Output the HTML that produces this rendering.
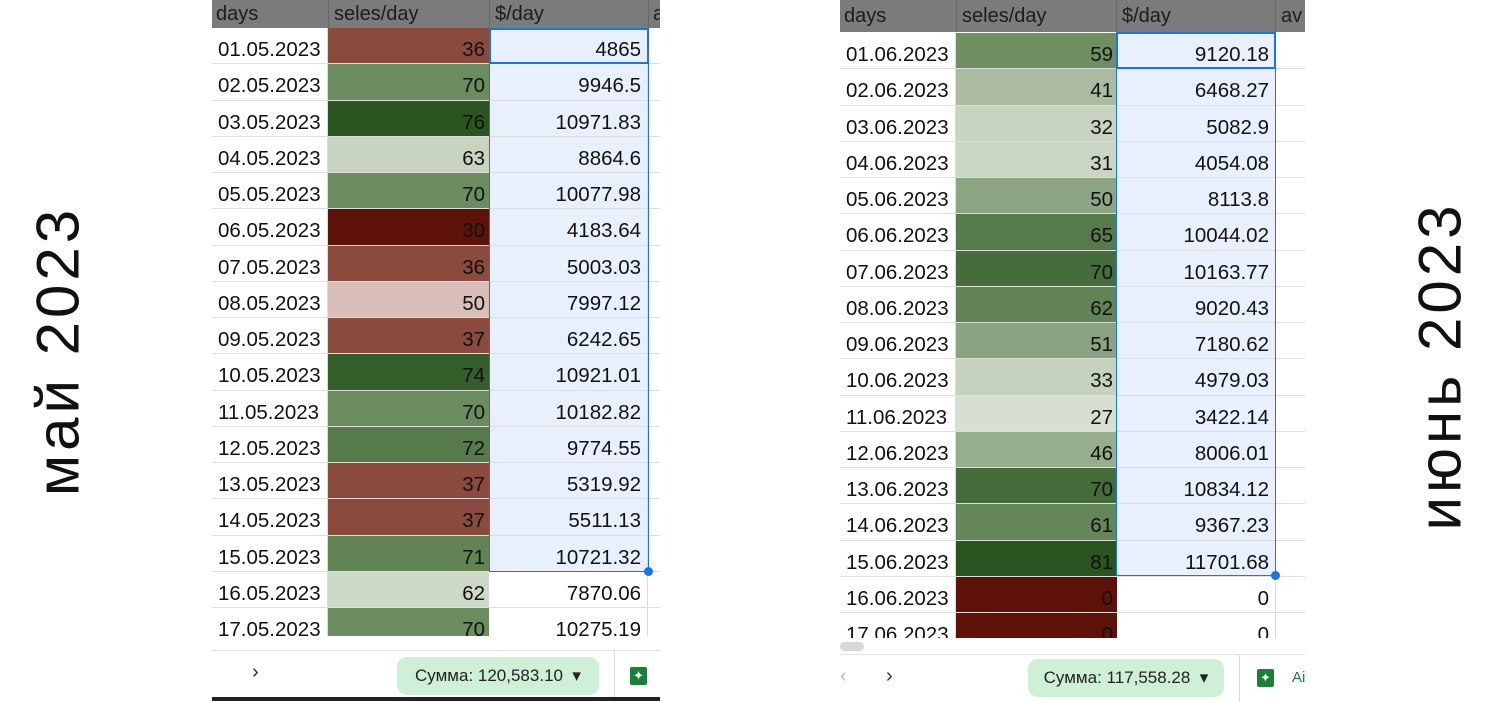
<!DOCTYPE html>
<html><head><meta charset="utf-8"><style>
*{margin:0;padding:0;box-sizing:border-box}
body{width:1488px;height:701px;background:#fff;position:relative;overflow:hidden;font-family:"Liberation Sans",Arial,sans-serif;color:#111}
.sheet{position:absolute;top:0;overflow:hidden;background:#fff}
.hdr{position:absolute;left:0;top:0;right:0;background:#7b7b7b;font-size:20px;color:#1c1c1c}
.hdr span{position:absolute;top:3px}
.row{position:absolute;left:0;right:0;height:36.25px;border-bottom:1px solid #ddd;font-size:20.5px}
.row div{position:absolute;top:0;height:100%;line-height:36px;padding-top:4px}
.d{left:0;width:116px;padding-left:6px;border-right:1px solid #ddd}
.s{left:116px;width:161px;text-align:right;padding-right:4px}
.v{left:277px;width:159px;text-align:right;padding-right:6px;border-right:1px solid #ddd}
.sel .v{background:#e8f0fe}
.lbl{position:absolute;font-size:60px;letter-spacing:4px;color:#111;white-space:nowrap;transform:translate(-50%,-50%) rotate(-90deg)}
.foot{position:absolute;background:#fff;border-top:1px solid #e3e3e3}
.pill{position:absolute;background:#cdf0d6;border-radius:10px;font-size:17px;color:#222;text-align:center;line-height:38px;height:38px}
.ico{position:absolute;width:17px;height:18px;background:#188038;border-radius:2px;color:#fff;font-size:13px;line-height:18px;text-align:center}
</style></head><body>
<div class="lbl" style="left:58px;top:351px">май 2023</div>
<div class="lbl" style="left:1440px;top:366px">июнь 2023</div>

<div class="sheet" style="left:212px;width:448px;height:636px">
<div class="hdr" style="height:28px"><span style="left:4px">days</span><span style="left:122px">seles/day</span><span style="left:283px">$/day</span><span style="left:441px">a</span>
<div style="position:absolute;left:116px;top:0;width:1px;height:28px;background:#666"></div><div style="position:absolute;left:277px;top:0;width:1px;height:28px;background:#666"></div><div style="position:absolute;left:436px;top:0;width:1px;height:28px;background:#666"></div></div>
<div class="row sel" style="top:28px"><div class="d">01.05.2023</div><div class="s" style="background:#8a4a3e">36</div><div class="v">4865</div></div>
<div class="row sel" style="top:64.25px"><div class="d">02.05.2023</div><div class="s" style="background:#6b8c5e">70</div><div class="v">9946.5</div></div>
<div class="row sel" style="top:100.5px"><div class="d">03.05.2023</div><div class="s" style="background:#2a5520">76</div><div class="v">10971.83</div></div>
<div class="row sel" style="top:136.75px"><div class="d">04.05.2023</div><div class="s" style="background:#c8d4c0">63</div><div class="v">8864.6</div></div>
<div class="row sel" style="top:173px"><div class="d">05.05.2023</div><div class="s" style="background:#6b8c5e">70</div><div class="v">10077.98</div></div>
<div class="row sel" style="top:209.25px"><div class="d">06.05.2023</div><div class="s" style="background:#5e130a">30</div><div class="v">4183.64</div></div>
<div class="row sel" style="top:245.5px"><div class="d">07.05.2023</div><div class="s" style="background:#8a4a3e">36</div><div class="v">5003.03</div></div>
<div class="row sel" style="top:281.75px"><div class="d">08.05.2023</div><div class="s" style="background:#d8bdb8">50</div><div class="v">7997.12</div></div>
<div class="row sel" style="top:318px"><div class="d">09.05.2023</div><div class="s" style="background:#8a4a3e">37</div><div class="v">6242.65</div></div>
<div class="row sel" style="top:354.25px"><div class="d">10.05.2023</div><div class="s" style="background:#335e2a">74</div><div class="v">10921.01</div></div>
<div class="row sel" style="top:390.5px"><div class="d">11.05.2023</div><div class="s" style="background:#6b8c5e">70</div><div class="v">10182.82</div></div>
<div class="row sel" style="top:426.75px"><div class="d">12.05.2023</div><div class="s" style="background:#567a4a">72</div><div class="v">9774.55</div></div>
<div class="row sel" style="top:463px"><div class="d">13.05.2023</div><div class="s" style="background:#8a4a3e">37</div><div class="v">5319.92</div></div>
<div class="row sel" style="top:499.25px"><div class="d">14.05.2023</div><div class="s" style="background:#8a4a3e">37</div><div class="v">5511.13</div></div>
<div class="row sel" style="top:535.5px"><div class="d">15.05.2023</div><div class="s" style="background:#628455">71</div><div class="v">10721.32</div></div>
<div class="row" style="top:571.75px"><div class="d">16.05.2023</div><div class="s" style="background:#cdd8c6">62</div><div class="v">7870.06</div></div>
<div class="row" style="top:608px"><div class="d">17.05.2023</div><div class="s" style="background:#6b8c5e">70</div><div class="v">10275.19</div></div>
<div style="position:absolute;left:277px;top:28px;width:160px;height:544px;border:1.5px solid #1a73e8"></div>
<div style="position:absolute;left:277px;top:28px;width:160px;height:36px;border:2px solid #1a73e8"></div>
<div style="position:absolute;left:432px;top:567px;width:9px;height:9px;border-radius:50%;background:#1a73e8"></div>
</div>
<div class="foot" style="left:212px;top:650px;width:448px;height:47px">
<div style="position:absolute;left:40px;top:10px;font-size:20px;color:#333">›</div>
<div class="pill" style="left:185px;top:6px;width:202px">Сумма: 120,583.10 &nbsp;▾</div>
<div style="position:absolute;left:402px;top:0;width:1px;height:47px;background:#ddd"></div>
<div class="ico" style="left:418px;top:16px">✦</div>
</div>
<div style="position:absolute;left:212px;top:697px;width:448px;height:4px;background:#222"></div>

<div class="sheet" style="left:840px;width:465px;height:638px">
<div class="hdr" style="height:32px"><span style="left:4px;top:5px">days</span><span style="left:122px;top:5px">seles/day</span><span style="left:282px;top:5px">$/day</span><span style="left:441px;top:5px">av</span>
<div style="position:absolute;left:116px;top:0;width:1px;height:32px;background:#666"></div><div style="position:absolute;left:276px;top:0;width:1px;height:32px;background:#666"></div><div style="position:absolute;left:435px;top:0;width:1px;height:32px;background:#666"></div></div>
<div class="row sel" style="top:33px"><div class="d">01.06.2023</div><div class="s" style="background:#6f8f63">59</div><div class="v">9120.18</div></div>
<div class="row sel" style="top:69.25px"><div class="d">02.06.2023</div><div class="s" style="background:#aabba0">41</div><div class="v">6468.27</div></div>
<div class="row sel" style="top:105.5px"><div class="d">03.06.2023</div><div class="s" style="background:#c8d4c0">32</div><div class="v">5082.9</div></div>
<div class="row sel" style="top:141.75px"><div class="d">04.06.2023</div><div class="s" style="background:#cad6c3">31</div><div class="v">4054.08</div></div>
<div class="row sel" style="top:178px"><div class="d">05.06.2023</div><div class="s" style="background:#8ca582">50</div><div class="v">8113.8</div></div>
<div class="row sel" style="top:214.25px"><div class="d">06.06.2023</div><div class="s" style="background:#577a4b">65</div><div class="v">10044.02</div></div>
<div class="row sel" style="top:250.5px"><div class="d">07.06.2023</div><div class="s" style="background:#476c3c">70</div><div class="v">10163.77</div></div>
<div class="row sel" style="top:286.75px"><div class="d">08.06.2023</div><div class="s" style="background:#628455">62</div><div class="v">9020.43</div></div>
<div class="row sel" style="top:323px"><div class="d">09.06.2023</div><div class="s" style="background:#8aa380">51</div><div class="v">7180.62</div></div>
<div class="row sel" style="top:359.25px"><div class="d">10.06.2023</div><div class="s" style="background:#c5d2bd">33</div><div class="v">4979.03</div></div>
<div class="row sel" style="top:395.5px"><div class="d">11.06.2023</div><div class="s" style="background:#d6dfd0">27</div><div class="v">3422.14</div></div>
<div class="row sel" style="top:431.75px"><div class="d">12.06.2023</div><div class="s" style="background:#97ae8d">46</div><div class="v">8006.01</div></div>
<div class="row sel" style="top:468px"><div class="d">13.06.2023</div><div class="s" style="background:#466b3b">70</div><div class="v">10834.12</div></div>
<div class="row sel" style="top:504.25px"><div class="d">14.06.2023</div><div class="s" style="background:#658656">61</div><div class="v">9367.23</div></div>
<div class="row sel" style="top:540.5px"><div class="d">15.06.2023</div><div class="s" style="background:#2a5520">81</div><div class="v">11701.68</div></div>
<div class="row" style="top:576.75px"><div class="d">16.06.2023</div><div class="s" style="background:#5e130a">0</div><div class="v">0</div></div>
<div class="row" style="top:613px"><div class="d">17.06.2023</div><div class="s" style="background:#5e130a">0</div><div class="v">0</div></div>
<div style="position:absolute;left:276px;top:33px;width:160px;height:543px;border:1.5px solid #1a73e8"></div>
<div style="position:absolute;left:276px;top:32px;width:160px;height:37px;border:2px solid #1a73e8"></div>
<div style="position:absolute;left:431px;top:571px;width:9px;height:9px;border-radius:50%;background:#1a73e8"></div>
</div>
<div style="position:absolute;left:840px;top:638px;width:465px;height:16px;background:#fff"><div style="position:absolute;left:0;top:4px;width:24px;height:9px;border-radius:5px;background:#d8d8d8"></div></div>
<div class="foot" style="left:840px;top:654px;width:465px;height:47px">
<div style="position:absolute;left:0;top:10px;font-size:20px;color:#bbb">‹</div>
<div style="position:absolute;left:46px;top:10px;font-size:20px;color:#333">›</div>
<div class="pill" style="left:188px;top:4px;width:196px;height:38px">Сумма: 117,558.28 &nbsp;▾</div>
<div style="position:absolute;left:399px;top:0;width:1px;height:47px;background:#ddd"></div>
<div class="ico" style="left:417px;top:14px">✦</div>
<div style="position:absolute;left:452px;top:14px;font-size:15px;color:#188038">Ai</div>
</div>
</body></html>
